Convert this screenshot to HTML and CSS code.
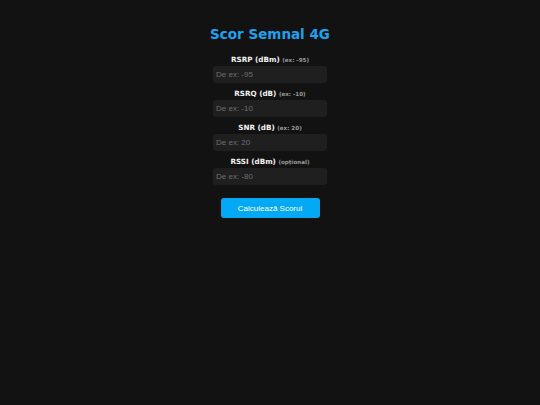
FILE: index.html
```html
<!DOCTYPE html>
<html lang="ro">
<head>
<meta charset="utf-8">
<title>Scor Semnal 4G</title>
<link rel="stylesheet" href="styles.css">
</head>
<body>
<main class="wrap">
  <h1 class="title">Scor Semnal 4G</h1>
  <form class="form">
    <div class="field">
      <label class="label">RSRP (dBm) <span class="hint">(ex: -95)</span></label>
      <input class="input" type="text" placeholder="De ex: -95">
    </div>
    <div class="field">
      <label class="label">RSRQ (dB) <span class="hint">(ex: -10)</span></label>
      <input class="input" type="text" placeholder="De ex: -10">
    </div>
    <div class="field">
      <label class="label">SNR (dB) <span class="hint">(ex: 20)</span></label>
      <input class="input" type="text" placeholder="De ex: 20">
    </div>
    <div class="field">
      <label class="label">RSSI (dBm) <span class="hint">(opțional)</span></label>
      <input class="input" type="text" placeholder="De ex: -80">
    </div>
    <button class="btn" type="button">Calculează Scorul</button>
  </form>
</main>
</body>
</html>
```
FILE: styles.css
```css
html, body {
  margin: 0;
  padding: 0;
  background: #121212;
  height: 100%;
}
body {
  font-family: "DejaVu Sans", Verdana, sans-serif;
  color: #e8e8e8;
}
.wrap {
  display: flex;
  flex-direction: column;
  align-items: center;
  padding-top: 25px;
}
.title {
  margin: 0 0 12px;
  font-size: 13.5px;
  font-weight: bold;
  color: #1aa3f0;
  line-height: 18px;
}
.form {
  width: 114px;
  display: flex;
  flex-direction: column;
}
.field {
  display: flex;
  flex-direction: column;
  align-items: center;
  margin-bottom: 6px;
}
.label {
  display: block;
  font-size: 7.2px;
  font-weight: bold;
  line-height: 9px;
  height: 9px;
  color: #f2f2f2;
  margin-bottom: 2px;
  white-space: nowrap;
}
.hint {
  font-size: 5.6px;
  color: #9a9a9a;
}
.input {
  box-sizing: border-box;
  width: 114px;
  height: 17px;
  border: none;
  border-radius: 3px;
  background: #1f1f1f;
  color: #ddd;
  padding: 0 3px;
  font-family: "Liberation Sans", Arial, sans-serif;
  font-size: 8px;
  outline: none;
  margin: 0;
}
.input::placeholder {
  color: #6f6f6f;
}
.btn {
  align-self: center;
  margin-top: 7px;
  width: 99px;
  height: 20px;
  border: none;
  border-radius: 3px;
  background: #03a9f4;
  color: #ffffff;
  font-family: "Liberation Sans", Arial, sans-serif;
  font-size: 8px;
  cursor: pointer;
}
```
